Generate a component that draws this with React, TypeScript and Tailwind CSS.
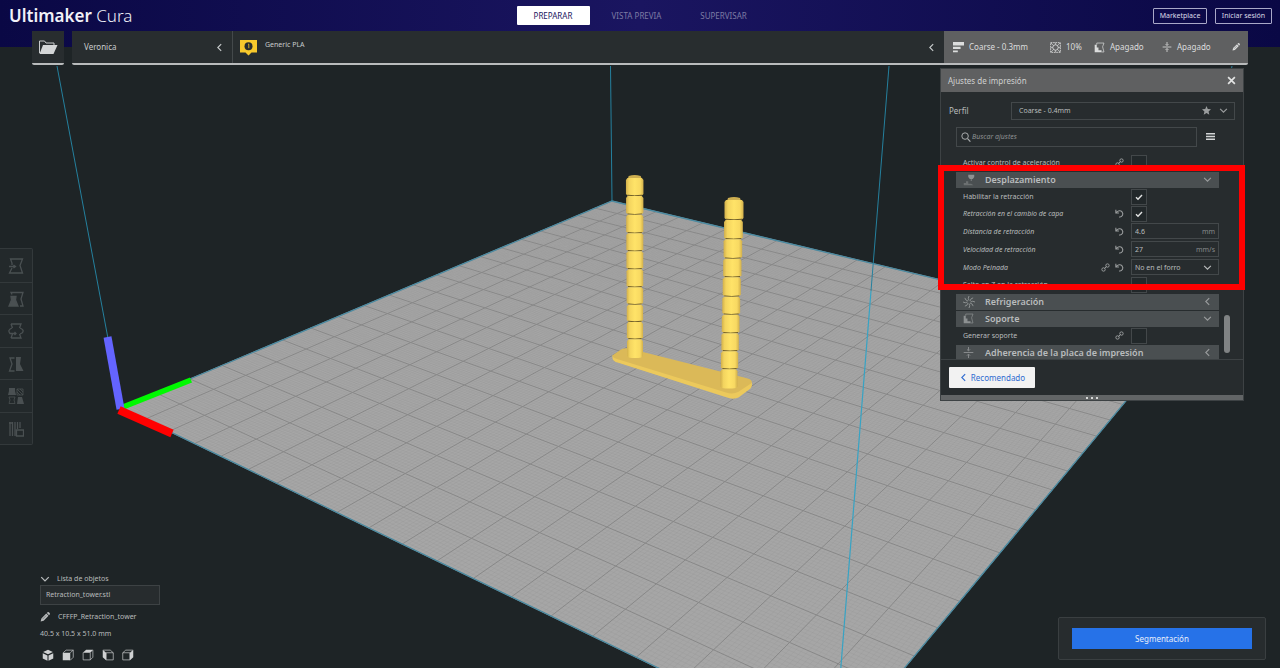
import type { ReactNode } from "react";

type Point = [number, number];

/* ---------- 3D viewport ---------- */

const CELLS = 20;

// Perspective projection of the unit build plate onto the viewport.
function project(u: number, v: number): Point {
  const w = 1 - 0.3488 * u + 0.4698 * v;
  return [(422.1 * u + 778.5 * v + 121) / w, (82.4 * u - 112.6 * v + 408) / w];
}

function gridPath(step: number, skipMajor: boolean): string {
  const parts: string[] = [];
  const count = CELLS * step;
  for (let i = 0; i <= count; i++) {
    if (skipMajor && i % step === 0) continue;
    const t = i / count;
    const lines: [Point, Point][] = [
      [project(t, 0), project(t, 1)],
      [project(0, t), project(1, t)],
    ];
    for (const [a, b] of lines) {
      parts.push(`M${a[0].toFixed(1)} ${a[1].toFixed(1)}L${b[0].toFixed(1)} ${b[1].toFixed(1)}`);
    }
  }
  return parts.join("");
}

const MAJOR = gridPath(1, false);
const MINOR = gridPath(10, true);

const LEFT_TOWER = [178, 196, 214.7, 233.3, 251.3, 269.3, 287.3, 304.7, 322, 339.3, 358];
const RIGHT_TOWER = [200, 220, 239.3, 258.7, 277.3, 296.7, 314.7, 333.3, 351.3, 369.3, 388.7];

function Tower({ stops, topX, bottomX, topW, bottomW }: { stops: number[]; topX: number; bottomX: number; topW: number; bottomW: number }) {
  const last = stops.length - 2;
  return (
    <g>
      <path
        d={`M${topX - 7} ${stops[0] + 1}L${topX - 6} ${stops[0] - 2}Q${topX} ${stops[0] - 4} ${topX + 6} ${stops[0] - 2}L${topX + 7} ${stops[0] + 1}Z`}
        fill="#cdae50"
      />
      {stops.slice(0, -1).map((y, i) => {
        const f = i / last;
        const cx = topX + (bottomX - topX) * f;
        const h = (topW + (bottomW - topW) * f) / 2;
        const b = stops[i + 1];
        return (
          <g key={y}>
            <path
              d={`M${cx - h} ${y + 2}L${cx - h + 1.5} ${y}H${cx + h - 1.5}L${cx + h} ${y + 2}V${b - 2}L${cx + h - 1.5} ${b - 0.6}Q${cx} ${b + 0.4} ${cx - h + 1.5} ${b - 0.6}L${cx - h} ${b - 2}Z`}
              fill="url(#filament)"
            />
            {i < last && (
              <path d={`M${cx - h + 1.5} ${b - 0.8}Q${cx} ${b + 0.4} ${cx + h - 1.5} ${b - 0.8}`} fill="none" stroke="#6e5d28" strokeWidth="1" />
            )}
          </g>
        );
      })}
    </g>
  );
}

function Viewport() {
  return (
    <svg className="absolute inset-0 h-full w-full" viewBox="0 0 1280 668" preserveAspectRatio="xMidYMin slice" aria-hidden="true">
      <defs>
        <linearGradient id="filament">
          <stop offset="0" stopColor="#d2b04c" />
          <stop offset=".18" stopColor="#f3d45f" />
          <stop offset=".5" stopColor="#ffe368" />
          <stop offset=".82" stopColor="#f8d962" />
          <stop offset="1" stopColor="#d2b04c" />
        </linearGradient>
      </defs>
      <polygon points="121,408 612,201 1179,337 834,753" fill="#a6a6a6" />
      <path d={MINOR} fill="none" stroke="#8f8f8f" strokeWidth=".5" opacity=".4" />
      <path d={MAJOR} fill="none" stroke="#888888" strokeWidth="1" />
      <polygon points="121,408 612,201 1179,337 834,753" fill="none" stroke="#4b8ba2" strokeWidth="1.3" />
      <path d="M57 66L121 408M610.500 66L612 201M1232 66L1179 337M889 66L871 291" fill="none" stroke="#25809e" strokeWidth="1" />
      <path d="M871 291L834 753" fill="none" stroke="#36a3c4" strokeWidth="1.200" />
      <path d="M612.500 355v3.500q1 3 5 4l108 34.500q8 3 13 .5l12-9q2-2 1.500-6z" fill="#ecc95c" />
      <path d="M613 355l8-5.500q3-2 8-1l117 29.500q8 2 5 5.500l-13 8.500q-5 2.500-12 .5l-109-33.500q-6-2-4-4z" fill="#dbb958" />
      <Tower stops={LEFT_TOWER} topX={634.7} bottomX={635} topW={17.5} bottomW={16} />
      <Tower stops={RIGHT_TOWER} topX={734} bottomX={729} topW={19} bottomW={17} />
      <g strokeWidth="8" fill="none">
        <path d="M123 407L191 380" stroke="#00f900" strokeWidth="5.500" />
        <path d="M107.500 337L120.500 409" stroke="#6464ff" />
        <path d="M119 410L172 433.500" stroke="#ff0000" />
      </g>
    </svg>
  );
}

/* ---------- Icons ---------- */

function Icon({ children, className = "h-3 w-3" }: { children: ReactNode; className?: string }) {
  return (
    <svg viewBox="0 0 16 16" className={`shrink-0 ${className}`} fill="none" stroke="currentColor" strokeWidth="1.3" aria-hidden="true">
      {children}
    </svg>
  );
}

const Chevron = ({ dir, className }: { dir: "left" | "down"; className?: string }) => (
  <Icon className={className}>
    <path d={dir === "left" ? "M11 2L5 8l6 6" : "M2 5l6 6 6-6"} strokeWidth="2" />
  </Icon>
);

const Link = () => (
  <Icon className="h-[9px] w-[9px] text-[#9a9d9e]">
    <circle cx="4.500" cy="11.500" r="3" strokeWidth="1.700" />
    <circle cx="11.500" cy="4.500" r="3" strokeWidth="1.700" />
    <path d="M6 10l4-4" strokeWidth="1.700" />
  </Icon>
);

const Undo = () => (
  <Icon className="h-[9px] w-[9px] text-[#9a9d9e]">
    <path d="M1.500 1.500v5.500h5.500M2 6.500C5 2.500 10 2 12.500 5c3 4 1 9-5 9.500" strokeWidth="1.900" />
  </Icon>
);

const Pencil = ({ className }: { className?: string }) => (
  <Icon className={className}>
    <path d="M1 15l1.200-4.800L10 2.400l3.600 3.600-7.800 7.800zM11 1.500l1-1q1.500-1 3 .5t.5 3l-1 1z" fill="currentColor" stroke="none" />
    <path d="M4 11.500l6-6" stroke="#303536" strokeWidth=".7" />
  </Icon>
);

const Support = ({ className }: { className?: string }) => (
  <Icon className={className}>
    <path d="M1 4v11h10v-3H6.500V8H4V4z" fill="currentColor" stroke="none" />
    <path d="M4 4V1.500h10.500L12.500 7l2 7.500H11" strokeWidth="1" />
  </Icon>
);

const Adhesion = ({ className }: { className?: string }) => (
  <Icon className={className}>
    <path d="M1 8h14M8 0v5M8 16v-5M5.800 3.500L8 5.700l2.200-2.200M5.800 12.500L8 10.300l2.200 2.200" />
  </Icon>
);

const Infill = ({ className }: { className?: string }) => (
  <Icon className={className}>
    <rect x="1" y="1" width="14" height="14" strokeDasharray="2.500 1" />
    <circle cx="8" cy="8" r="4" />
    <path d="M1 1l4 4M15 1l-4 4M1 15l4-4M15 15l-4-4M8 1v3M8 12v3M1 8h3M12 8h3" strokeWidth=".9" />
  </Icon>
);

const Travel = ({ className }: { className?: string }) => (
  <Icon className={className}>
    <path d="M7 1h8v3l-2 2.500h-4L7 4z" fill="currentColor" stroke="none" />
    <path d="M1 15v-3h3V9.500h3V13h4l3 2z" fill="currentColor" stroke="none" opacity=".5" />
    <path d="M11 7v2" />
  </Icon>
);

const Fan = ({ className }: { className?: string }) => (
  <Icon className={className}>
    <path d="M8 6Q6 3 8 0M9.500 6.500Q10 3 13.500 2.500M10 8q3-2 6 0M9.500 9.500q3.500.5 4 4M8 10q2 3 0 6M6.500 9.500Q6 13 2.500 13.500M6 8q-3 2-6 0M6.500 6.500Q3 6 2.500 2.500" />
  </Icon>
);

const ToolIcons: { label: string; art: ReactNode }[] = [
  { label: "Mover", art: <path d="M4 7V5L2.500 1h12L12 7.500 14.500 15h-13L4 10M1 8.500h6M5.500 7l2 1.500-2 1.500" /> },
  {
    label: "Escalar",
    art: (
      <>
        <path d="M4 3.500L3 1.500h12l-2 6.500 2 7h-3" />
        <path d="M3 5.500h5L7.500 9 10 15H1l2.500-6z" fill="currentColor" />
      </>
    ),
  },
  { label: "Rotar", art: <path d="M3 1h10l-1.500 4M3 1l1.500 4M3 15h10l-1.500-4M3 15l1.500-4M4 5Q-1 7 2 10.500h6M6.500 9L8 10.500 6.500 12M12 5q5 2 2 5l-2 1" /> },
  {
    label: "Espejo",
    art: (
      <>
        <path d="M6.500 2H2l2 6-2.500 7h5" />
        <path d="M8 1h5l-1 7 3.500 7H8z" fill="currentColor" stroke="none" />
      </>
    ),
  },
  {
    label: "Ajustes por modelo",
    art: (
      <>
        <path d="M1 0h6v3l1 4H0l1-4zM10 9h4l2 7H9z" fill="currentColor" stroke="none" />
        <path d="M1 9h6L6 12l1 3.500H1L2 12zM9 1l6 6M12 1l3 3M9 4l3 3M9 1h6v6H9z" strokeWidth=".8" />
      </>
    ),
  },
  { label: "Bloqueador de soporte", art: <path d="M2 1v14M4.500 1v14M7 1v14M9.500 1v7M12 1v6M8.500 9h7v6h-7zM1 2h3" /> },
];

/* ---------- Header ---------- */

function TopBar() {
  return (
    <header className="grid h-[31px] grid-cols-[1fr_auto_1fr] items-center pl-2 pr-2">
      <h1 className="pl-px text-[17px] leading-6 text-[#f1f1f8]">
        <b className="font-semibold">Ultimaker</b> <span className="font-light">Cura</span>
      </h1>
      <nav className="flex text-[8px]">
        <button className="h-[19px] w-[73px] rounded-[1px] bg-white text-[#1a1660]">PREPARAR</button>
        <button className="ml-2 h-[19px] w-[78px] text-[#7d7ba4]">VISTA PREVIA</button>
        <button className="ml-2 h-[19px] w-[80px] text-[#7d7ba4]">SUPERVISAR</button>
      </nav>
      <div className="flex justify-end gap-2 text-[7px] text-[#dcdce8]">
        <button className="h-4 w-[54px] rounded-[1px] border border-[#a9a8c8] leading-3">Marketplace</button>
        <button className="h-4 w-[57px] whitespace-nowrap rounded-[1px] border border-[#a9a8c8] leading-3">Iniciar sesión</button>
      </div>
    </header>
  );
}

function StageBar() {
  return (
    <div className="flex h-[34px] gap-2 px-8 text-[8px] text-[#c9cccd]">
      <button aria-label="Abrir archivo" className="grid w-8 place-items-center rounded-b-[2px] border-b-2 border-[#b9bbbc] bg-[#282d2f]">
        <svg viewBox="0 0 20 15" className="h-[15px] w-5" aria-hidden="true">
          <path d="M1.500 13V1h5l1.500 2h8v2" fill="none" stroke="#c9cccd" />
          <path d="M5 5h14.500l-4 9H1.500z" fill="#d4d6d7" />
        </svg>
      </button>
      <div className="flex flex-1 rounded-b-[2px] border-b-2 border-[#b9bbbc] bg-[#282d2f]">
        <button className="flex w-[161px] items-center justify-between border-r border-[#44494b] pl-3 pr-2">
          Veronica
          <Chevron dir="left" className="h-[9px] w-[9px]" />
        </button>
        <button className="flex flex-1 items-center pl-[7px] pr-2">
          <svg viewBox="0 0 17 17" className="h-[17px] w-[17px]" aria-hidden="true">
            <path d="M0 1h17v12.500h-5.500l-3 3-3-3H0z" fill="#f8c92c" />
            <circle cx="8.500" cy="7.200" r="4" fill="#282d2f" />
            <path d="M8 5.200h.8v4" fill="none" stroke="#f8c92c" strokeWidth=".8" />
          </svg>
          <span className="mb-1 ml-2 text-[7px]">Generic PLA</span>
          <Chevron dir="left" className="ml-auto h-[9px] w-[9px]" />
        </button>
        <button className="flex w-[304px] items-center bg-[#5f6061] pl-[9px] pr-2 text-[#dcdddd]">
          <Icon className="h-[11px] w-[11px]">
            <path d="M0 0h16v5H0zM0 7h11v3H0zM0 12.500h7V15H0z" fill="currentColor" stroke="none" />
          </Icon>
          <span className="ml-[5px] w-[81px] text-left">Coarse - 0.3mm</span>
          <Infill className="h-[11px] w-[11px]" />
          <span className="ml-[5px] w-[28px] text-left">10%</span>
          <Support className="h-[11px] w-[11px]" />
          <span className="ml-[5px] w-[52px] text-left">Apagado</span>
          <Adhesion className="h-[10px] w-[10px]" />
          <span className="ml-[5px] text-left">Apagado</span>
          <Pencil className="ml-auto h-2 w-2" />
        </button>
      </div>
    </div>
  );
}

/* ---------- Print settings panel ---------- */

function Category({ icon, title, open }: { icon: ReactNode; title: string; open?: boolean }) {
  return (
    <div className="flex h-[17px] items-center">
      <button className="flex h-4 w-full items-center bg-[#4a4f51] pl-[7px] pr-[7px] text-[9px] font-semibold text-[#b9bcbd]">
        <span className="w-[22px] text-[#8d9192]">{icon}</span>
        {title}
        <Chevron dir={open ? "down" : "left"} className="ml-auto h-[9px] w-[9px] text-[#9a9d9e]" />
      </button>
    </div>
  );
}

function Setting({ id, label, changed, linked, field, children }: { id: string; label: string; changed?: boolean; linked?: boolean; field?: boolean; children: ReactNode }) {
  return (
    <div className={`flex items-center pl-[7px] ${field ? "h-[18px]" : "h-[17px]"}`}>
      <label htmlFor={id} className={`pt-px ${changed ? "italic" : ""}`}>
        {label}
      </label>
      <span className="ml-auto mr-[7px] flex gap-[5px]">
        {linked && <Link />}
        {changed && <Undo />}
      </span>
      <span className="w-[88px]">{children}</span>
    </div>
  );
}

function Check({ id, checked }: { id: string; checked?: boolean }) {
  return (
    <span className="grid h-4 w-4 place-items-center">
      <input id={id} type="checkbox" defaultChecked={checked} className="peer col-start-1 row-start-1 h-4 w-4 appearance-none border border-[#43484a] bg-[#22282a]" />
      <Icon className="pointer-events-none col-start-1 row-start-1 hidden h-2 w-2 text-[#e3e4e4] peer-checked:block">
        <path d="M2 8.500l4 4 8-8.500" strokeWidth="2.800" />
      </Icon>
    </span>
  );
}

function NumberBox({ id, value, unit }: { id: string; value: string; unit: string }) {
  return (
    <span className="flex h-4 items-center border border-[#43484a] pl-[3px] pr-[3px] pt-px">
      <input id={id} defaultValue={value} className="w-full min-w-0 bg-transparent" />
      <span className="text-[#85898a]">{unit}</span>
    </span>
  );
}

function SettingsPanel() {
  return (
    <section className="relative w-[304px] border border-[#3d4244] bg-[#272c2e] text-[7px] leading-3 text-[#b9bcbd]">
      <div className="flex h-[23px] items-center justify-between bg-[#5f6061] pl-[7px] pr-[7px]">
        <h2 className="text-[8px] text-[#cfd0d0]">Ajustes de impresión</h2>
        <button aria-label="Cerrar" className="text-[#e3e4e4]">
          <Icon className="h-[9px] w-[9px]">
            <path d="M2 2l12 12M14 2L2 14" strokeWidth="3" />
          </Icon>
        </button>
      </div>
      <div className="mt-[9px] flex h-[19px] items-center pl-2 pr-2">
        <label htmlFor="profile" className="w-[62px] text-[8px]">
          Perfil
        </label>
        <div className="grid h-[18px] flex-1 items-center border border-[#43484a]">
          <select id="profile" className="col-start-1 row-start-1 h-full appearance-none bg-transparent pl-[7px] pt-px">
            <option>Coarse - 0.4mm</option>
          </select>
          <span className="pointer-events-none col-start-1 row-start-1 mr-[6px] flex items-center gap-2 justify-self-end text-[#9a9d9e]">
            <Icon className="h-[9px] w-[9px]">
              <path d="M8 0l2.300 5.400 5.700.5-4.300 3.800L13 15.500l-5-3-5 3 1.300-5.800L0 5.900l5.700-.5z" fill="currentColor" stroke="none" />
            </Icon>
            <Chevron dir="down" className="h-[9px] w-[9px]" />
          </span>
        </div>
      </div>
      <div className="mt-[6px] flex h-[21px] items-center pl-[15px]">
        <div className="flex h-5 w-[241px] items-center gap-px border border-[#43484a] pl-1">
          <Icon className="h-[10px] w-[10px] text-[#a9acad]">
            <circle cx="6.500" cy="6.500" r="5.200" strokeWidth="1.600" />
            <path d="M10.500 10.500L15 15.500" strokeWidth="1.800" />
          </Icon>
          <input aria-label="Buscar ajustes" placeholder="Buscar ajustes" className="flex-1 bg-transparent pt-px italic placeholder:text-[#8d9192]" />
        </div>
        <button aria-label="Visibilidad de los ajustes" className="ml-[9px] text-[#d4d6d7]">
          <Icon className="h-[9px] w-[9px]">
            <path d="M0 3h16M0 8h16M0 13h16" strokeWidth="2.500" />
          </Icon>
        </button>
      </div>
      <div className="mt-[7px] flex h-[205px] overflow-hidden pl-[15px]">
        <div className="w-[263px]">
          <Setting id="accel" label="Activar control de aceleración" linked>
            <Check id="accel" />
          </Setting>
          <Category icon={<Travel className="h-3 w-3" />} title="Desplazamiento" open />
          <Setting id="retract" label="Habilitar la retracción">
            <Check id="retract" checked />
          </Setting>
          <Setting id="layer" label="Retracción en el cambio de capa" changed>
            <Check id="layer" checked />
          </Setting>
          <Setting id="distance" label="Distancia de retracción" changed field>
            <NumberBox id="distance" value="4.6" unit="mm" />
          </Setting>
          <Setting id="speed" label="Velocidad de retracción" changed field>
            <NumberBox id="speed" value="27" unit="mm/s" />
          </Setting>
          <Setting id="combing" label="Modo Peinada" changed linked field>
            <span className="grid h-4 items-center border border-[#43484a]">
              <select id="combing" className="col-start-1 row-start-1 appearance-none bg-transparent pl-[3px] pt-px">
                <option>No en el forro</option>
              </select>
              <Chevron dir="down" className="pointer-events-none col-start-1 row-start-1 mr-[6px] h-[9px] w-[9px] justify-self-end" />
            </span>
          </Setting>
          <Setting id="zhop" label="Salto en Z en la retracción">
            <Check id="zhop" />
          </Setting>
          <Category icon={<Fan className="h-3 w-3" />} title="Refrigeración" />
          <Category icon={<Support className="h-[11px] w-[11px]" />} title="Soporte" open />
          <Setting id="support" label="Generar soporte" linked>
            <Check id="support" />
          </Setting>
          <Category icon={<Adhesion className="h-[11px] w-[11px]" />} title="Adherencia de la placa de impresión" />
        </div>
        <div className="ml-[5px] mt-[161px] h-[38px] w-[6px] rounded-full bg-[#808384]" />
      </div>
      <div className="flex h-9 items-center border-t border-[#3d4244] pl-2">
        <button className="flex h-[21px] w-[86px] items-center justify-center gap-[3px] rounded-[1px] bg-[#f2f2f2] text-[8px] text-[#2f6bd0]">
          <Chevron dir="left" className="h-[9px] w-[9px]" />
          Recomendado
        </button>
      </div>
      <div className="flex h-[5px] items-center justify-center gap-[3px] bg-[#626566]">
        <i className="h-[2px] w-[2px] rounded-full bg-white" />
        <i className="h-[2px] w-[2px] rounded-full bg-white" />
        <i className="h-[2px] w-[2px] rounded-full bg-white" />
      </div>
      <div className="pointer-events-none absolute -left-[3px] -right-[2px] top-24 h-[125px] border-[6px] border-[#ff0000]" />
    </section>
  );
}

/* ---------- Left side ---------- */

function Toolbox() {
  return (
    <div className="w-[33px] rounded-r-[2px] border border-l-0 border-[#33393b] bg-[#23292b]">
      {ToolIcons.map((tool, i) => (
        <button key={tool.label} aria-label={tool.label} className={`grid w-full place-items-center text-[#4a5052] odd:h-[33px] even:h-8 ${i ? "border-t border-[#33393b]" : ""}`}>
          <Icon className="h-4 w-4">{tool.art}</Icon>
        </button>
      ))}
    </div>
  );
}

const FACES = [
  { label: "Vista 3D", fill: "M8 1l6.500 3L8 7 1.500 4zM1 5.500l6.300 3V15.500L1 12.500zM15 5.500l-6.300 3v7l6.300-3z", line: "" },
  { label: "Vista frontal", fill: "M1 5h10v10H1z", line: "M1.500 5l4-3.500h9.500v9.500l-4 4M11 5l4-3.500" },
  { label: "Vista superior", fill: "M1 5l4.500-4H15l-4 4z", line: "M1.500 5v9.500H11V5M11 14.500l3.500-3.500V1.500" },
  { label: "Vista izquierda", fill: "M1 1l4.500 4v10L1 11z", line: "M1.500 1.500H11l4 3.500M5.500 5H15v9.500H5.500z" },
  { label: "Vista derecha", fill: "M15 1l-4.500 4v10l4.500-4z", line: "M14.500 1.500H5L1 5M10.500 5H1v9.500h9.500z" },
];

function ObjectList() {
  return (
    <div className="ml-10 w-[120px] text-[7px] leading-3 text-[#b9bcbd]">
      <button className="flex h-[13px] items-center gap-[7px]">
        <Chevron dir="down" className="h-[10px] w-[10px]" />
        Lista de objetos
      </button>
      <div className="flex h-5 items-center border border-[#3d4244] bg-[#272c2e] pl-[5px]">Retraction_tower.stl</div>
      <div className="mt-[6px] flex h-3 items-center gap-2">
        <Pencil className="h-[10px] w-[10px]" />
        CFFFP_Retraction_tower
      </div>
      <p className="mt-[5px] h-3">40.5 x 10.5 x 51.0 mm</p>
      <div className="ml-[2px] mt-[9px] flex h-3 gap-2 text-[#cfd1d2]">
        {FACES.map((face) => (
          <button key={face.label} aria-label={face.label}>
            <Icon>
              <path d={face.fill} fill="currentColor" stroke="none" />
              <path d={face.line} strokeWidth=".9" />
            </Icon>
          </button>
        ))}
      </div>
    </div>
  );
}

export default function App() {
  return (
    <div className="relative flex h-screen min-h-[620px] flex-col overflow-hidden bg-[#1e2426] font-['Noto_Sans',sans-serif]">
      <div className="absolute inset-x-0 top-0 h-[47px] bg-linear-to-r from-[#0a0845] via-[#1a1560] to-[#0a0845]" />
      <Viewport />
      <div className="relative flex flex-1 flex-col">
        <TopBar />
        <StageBar />
        <main className="flex flex-1 justify-between">
          <div className="flex flex-col justify-between pb-[7px] pt-[183px]">
            <Toolbox />
            <ObjectList />
          </div>
          <div className="flex flex-col items-end justify-between pb-2 pr-[14px] pt-[3px]">
            <div className="pr-[22px]">
              <SettingsPanel />
            </div>
            <div className="w-[208px] rounded-[2px] border border-[#3a3f41] bg-[#272c2e] px-[13px] py-[10px]">
              <button className="block h-[21px] w-full bg-[#2672e8] text-[8px] text-[#e6eefb]">Segmentación</button>
            </div>
          </div>
        </main>
      </div>
    </div>
  );
}
